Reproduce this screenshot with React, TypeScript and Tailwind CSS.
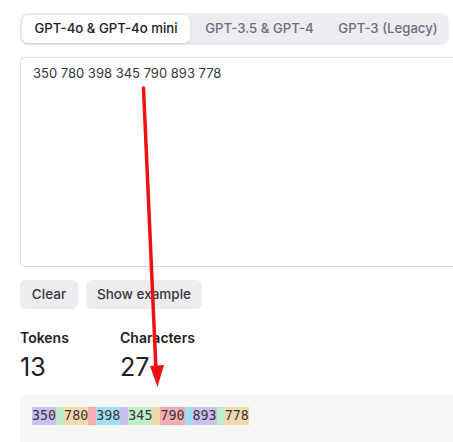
import React from "react";

const tabs = ["GPT-4o & GPT-4o mini", "GPT-3.5 & GPT-4", "GPT-3 (Legacy)"];

const colors = [
  "bg-[rgba(107,64,216,0.3)]",
  "bg-[rgba(104,222,122,0.4)]",
  "bg-[rgba(244,172,54,0.4)]",
  "bg-[rgba(239,65,70,0.4)]",
  "bg-[rgba(39,181,234,0.4)]",
];

const tokens = ["350", " ", "780", " ", "398", " ", "345", " ", "790", " ", "893", " ", "778"];

export default function App() {
  return (
    <div
      className="relative w-[453px] h-[442px] overflow-hidden bg-white text-[#353740]"
      style={{ fontFamily: "Inter, 'Noto Sans', sans-serif" }}
    >
      <div className="w-[600px] pl-5 pt-[13px]">
        {/* Tabs */}
        <div className="flex w-[429px] h-[32px] items-center gap-[2px] rounded-lg bg-[#ececf1] p-[2px]">
          {tabs.map((t, i) => (
            <button
              key={t}
              className={`h-full rounded-md text-[13.2px] font-medium ${
                i === 0
                  ? "bg-white text-[#202123] shadow-sm w-[168px]"
                  : i === 1
                  ? "text-[#6e6e80] w-[135px]"
                  : "text-[#6e6e80] w-[118px]"
              }`}
            >
              {t}
            </button>
          ))}
        </div>

        {/* Textarea */}
        <div className="mt-[12px] h-[210px] w-[500px] rounded-[5px] border border-[#d9d9e3] px-3 pt-[6px] text-[13px] text-[#353740]">
          350 780 398 345 790 893 778
        </div>

        {/* Buttons */}
        <div className="mt-[13px] flex gap-2">
          <button className="h-[29px] w-[58px] rounded-md bg-[#ececf1] text-[13.5px] font-medium text-[#353740]">
            Clear
          </button>
          <button className="h-[29px] w-[116px] rounded-md bg-[#ececf1] text-[13.5px] font-medium text-[#353740]">
            Show example
          </button>
        </div>

        {/* Stats */}
        <div className="mt-[20px] flex">
          <div className="w-[100px]">
            <div className="text-[14px] font-semibold text-[#202123] leading-[18px]">Tokens</div>
            <div className="mt-[5px] text-[25px] leading-[30px] text-[#202123]">13</div>
          </div>
          <div>
            <div className="text-[14px] font-semibold text-[#202123] leading-[18px]">Characters</div>
            <div className="mt-[5px] text-[25px] leading-[30px] text-[#202123]">27</div>
          </div>
        </div>

        {/* Token output */}
        <div className="mt-[13px] h-[80px] w-[500px] rounded-[5px] bg-[#f7f7f8] px-3 pt-3">
          <div
            className="flex text-[13.33px] leading-[18px] text-[#353740]"
            style={{ fontFamily: "'DejaVu Sans Mono', 'Liberation Mono', monospace" }}
          >
            {tokens.map((tk, i) => (
              <span key={i} className={`whitespace-pre ${colors[i % 5]}`}>
                {tk}
              </span>
            ))}
          </div>
        </div>
      </div>

      {/* Red arrow annotation */}
      <svg className="absolute left-0 top-0 pointer-events-none" width="453" height="442">
        <line x1="143.5" y1="88" x2="156" y2="370" stroke="#ee1111" strokeWidth="3.5" strokeLinecap="round" />
        <polygon points="150,366 164,365 157.5,387" fill="#ee1111" />
      </svg>
    </div>
  );
}
